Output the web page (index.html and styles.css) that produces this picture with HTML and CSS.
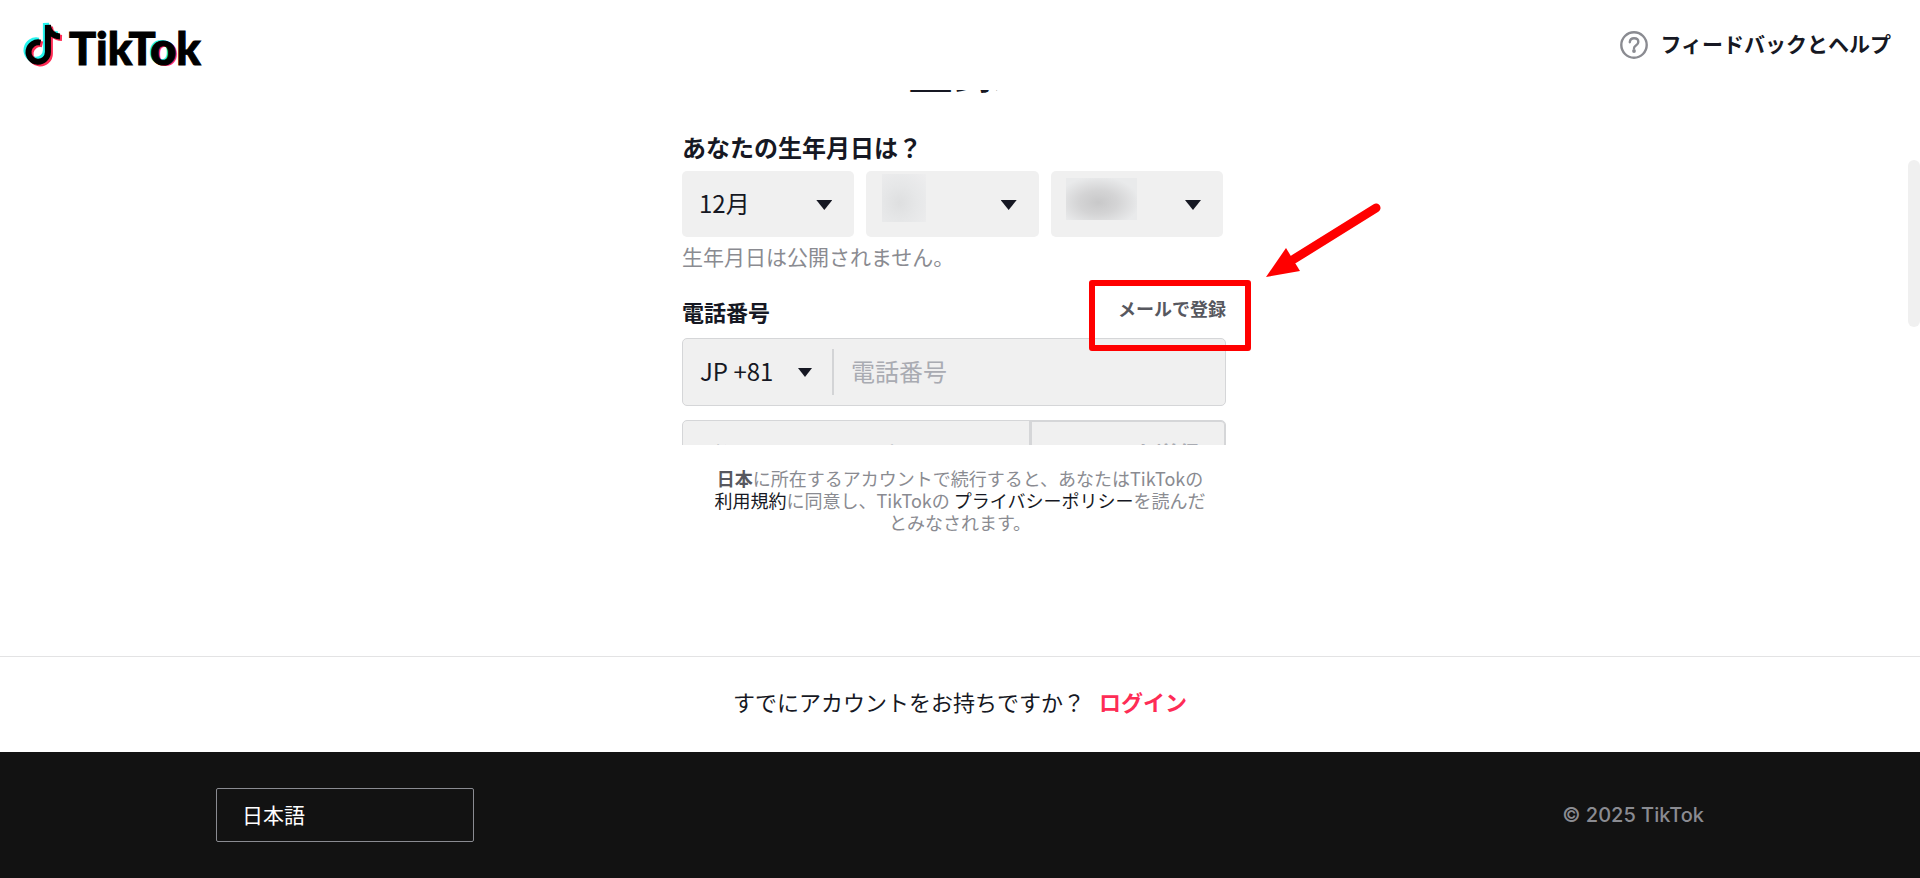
FILE: index.html
```html
<!DOCTYPE html>
<html lang="ja">
<head>
  <meta charset="UTF-8" />
  <meta name="viewport" content="width=device-width, initial-scale=1.0"/>
  <title>登録 | TikTok</title>
  <link rel="stylesheet" href="styles.css">
</head>
<body>

  <!-- Header -->
  <header class="header">
    <a href="#" class="logo" aria-label="TikTok">
      <svg class="logo-note" viewBox="0 0 38 44" fill="none" stroke-width="6" aria-hidden="true">
        <defs>
          <path id="note" d="M16.500 19.600A9.700 9.700 0 1 0 23.900 29V2C24.200 8.500 29 13.200 36 13.400"/>
        </defs>
        <use href="#note" stroke="#25f4ee" transform="translate(-2 -2)"/>
        <use href="#note" stroke="#fe2c55" transform="translate(2 1.700)"/>
        <use href="#note" stroke="#000"/>
      </svg>
      <span class="logo-text">TikT<span class="logo-o">o</span>k</span>
    </a>
    <a href="#" class="help">
      <svg class="help-icon" viewBox="0 0 28 28" fill="none" stroke="#8a8b91" stroke-width="2.4" aria-hidden="true">
        <circle cx="14" cy="14" r="12.7"/>
        <path d="M9.8 11.2c.2-2.4 1.900-3.900 4.300-3.900 2.500 0 4.200 1.500 4.200 3.600 0 1.700-.9 2.500-2.100 3.300-1.500 1-2.200 1.600-2.200 3" stroke-linecap="round"/>
        <circle cx="14" cy="20" r="1.900" fill="#8a8b91" stroke="none"/>
      </svg>
      <span class="help-text">フィードバックとヘルプ</span>
    </a>
  </header>

  <!-- Sign up form -->
  <main class="scroller">
    <form class="form">
      <h1 class="title">登録</h1>

      <h2 class="birth-label">あなたの生年月日は？</h2>
      <div class="birth">
        <div class="select-box">
          <select aria-label="月"><option>12月</option></select>
        </div>
        <div class="select-box">
          <select aria-label="日"><option></option></select>
          <span class="mask mask-day"></span>
        </div>
        <div class="select-box">
          <select aria-label="年"><option></option></select>
          <span class="mask mask-year"></span>
        </div>
      </div>
      <p class="hint">生年月日は公開されません。</p>

      <div class="phone-head">
        <label class="phone-label" for="phone">電話番号</label>
        <a href="#" class="email-link">メールで登録</a>
        <div class="highlight"></div>
        <svg class="arrow" viewBox="0 0 120 80" aria-hidden="true">
          <path d="M30 59 112 8" stroke="#f00" stroke-width="9" stroke-linecap="round"/>
          <path d="M2 77 22 48 36 71z" fill="#f00"/>
        </svg>
      </div>
      <div class="field">
        <div class="country">
          <select aria-label="国番号"><option>JP +81</option></select>
        </div>
        <input type="tel" id="phone" placeholder="電話番号">
      </div>

      <div class="field">
        <input type="text" class="code" aria-label="コード" placeholder="6桁のコードを入力">
        <button type="button" class="send">コードを送信</button>
      </div>
    </form>
    <span class="thumb"></span>
  </main>

  <section class="legal">
    <p><b>日本</b>に所在するアカウントで続行すると、あなたはTikTokの<a href="#">利用規約</a>に同意し、TikTokの <a href="#">プライバシーポリシー</a>を読んだとみなされます。</p>
  </section>

  <section class="login">
    <span>すでにアカウントをお持ちですか？</span>
    <a href="#">ログイン</a>
  </section>

  <!-- Footer -->
  <footer class="footer">
    <select class="language" aria-label="言語"><option>日本語</option></select>
    <span class="copyright">© 2025 TikTok</span>
  </footer>

</body>
</html>
```

FILE: styles.css
```css
* {
  padding: 0;
  margin: 0;
  box-sizing: border-box;
}

body {
  height: 100vh;
  display: flex;
  flex-direction: column;
  background: white;
  color: #161823;
  font-family: "Noto Sans CJK JP", sans-serif;
  overflow: hidden;
}

a {
  color: inherit;
  text-decoration: none;
}

select,
input,
button {
  appearance: none;
  border: none;
  background: none;
  color: inherit;
  font-family: inherit;
  font-size: 24px;
  outline: none;
}

/* Header */
.header {
  display: flex;
  align-items: center;
  justify-content: space-between;
  height: 90px;
  padding: 0 29px 0 24px;
}

.logo {
  display: flex;
  align-items: center;
  gap: 7px;
}

.logo-note {
  width: 38px;
  height: 44px;
  overflow: visible;
}

.logo-text {
  padding-top: 5px;
  color: black;
  font-family: Lato, sans-serif;
  font-size: 45px;
  font-weight: 900;
  line-height: 48px;
  -webkit-text-stroke: 1px black;
}

.logo-o {
  text-shadow: -2px -1px #25f4ee, 2px 1px #fe2c55;
}

.help {
  display: flex;
  align-items: center;
  gap: 12px;
  font-size: 21px;
  font-weight: bold;
}

.help-icon {
  width: 28px;
  height: 28px;
}

.help-text {
  padding-bottom: 4px;
}

/* Form */
.scroller {
  position: relative;
  flex: 1;
  min-height: 0;
  padding-right: 12px;
  overflow: hidden;
}

.form {
  max-width: 544px;
  margin: 0 auto;
}

.title {
  margin-top: -52px;
  font-size: 47px;
  line-height: 60px;
  text-align: center;
}

.birth-label {
  margin-top: 34px;
  font-size: 24px;
  line-height: 30px;
}

.birth {
  display: grid;
  grid-template-columns: repeat(3, 1fr);
  gap: 12px;
  margin-top: 9px;
  padding-right: 3px;
}

.select-box {
  position: relative;
  height: 66px;
  background: #f0f0f0;
  border-radius: 5px;
}

.select-box select {
  width: 100%;
  height: 100%;
  padding: 0 17px 4px;
}

.select-box::after {
  content: "";
  position: absolute;
  top: 29px;
  right: 22px;
  width: 16px;
  height: 10px;
  background: #161823;
  clip-path: polygon(0 0, 100% 0, 50% 100%);
  pointer-events: none;
}

.mask {
  position: absolute;
}

.mask-day {
  top: 3px;
  left: 16px;
  width: 44px;
  height: 48px;
  background: radial-gradient(ellipse at 40% 60%, #dedfe0, #e6e7e8 45%, #eeeeef);
}

.mask-year {
  top: 7px;
  left: 15px;
  width: 71px;
  height: 42px;
  background: radial-gradient(ellipse at 45% 58%, #c8c8c9, #d4d4d5 35%, #e9eaeb 75%);
}

.hint {
  margin-top: 4px;
  color: #8a8b91;
  font-size: 21px;
  line-height: 30px;
}

.phone-head {
  position: relative;
  display: flex;
  justify-content: space-between;
  align-items: flex-start;
  margin-top: 25px;
}

.phone-label {
  font-size: 22px;
  font-weight: bold;
  line-height: 30px;
}

.email-link {
  color: #57585f;
  font-size: 18px;
  font-weight: bold;
  line-height: 24px;
}

.highlight {
  position: absolute;
  z-index: 1;
  top: -16px;
  right: -25px;
  width: 162px;
  height: 71px;
  border: 6px solid #f00;
  border-radius: 3px;
  pointer-events: none;
}

.arrow {
  position: absolute;
  top: -96px;
  right: -158px;
  width: 120px;
  height: 80px;
}

.field {
  display: flex;
  align-items: center;
  height: 68px;
  margin-top: 12px;
  background: #f0f0f0;
  border: 1px solid #d5d6d8;
  border-radius: 5px;
}

.field + .field {
  margin-top: 14px;
}

.field input {
  flex: 1;
  min-width: 0;
  height: 100%;
  padding: 0 17px 3px;
}

.field .code {
  padding-bottom: 0;
}

.field input::placeholder {
  color: #a9abb2;
}

.country {
  position: relative;
  border-right: 2px solid #d3d4d6;
}

.country select {
  width: 149px;
  height: 46px;
  padding: 0 0 4px 17px;
}

.country::after {
  content: "";
  position: absolute;
  top: 19px;
  right: 20px;
  width: 14px;
  height: 9px;
  background: #161823;
  clip-path: polygon(0 0, 100% 0, 50% 100%);
  pointer-events: none;
}

.send {
  width: 196px;
  height: 100%;
  padding: 0 0 4px 12px;
  border: solid #d5d6d8;
  border-width: 1px 1px 1px 3px;
  border-radius: 0 4px 4px 0;
  color: #a9abb2;
  font-size: 22px;
  font-weight: bold;
}

.thumb {
  position: absolute;
  top: 70px;
  right: 0;
  width: 12px;
  height: 167px;
  background: #f0f0f0;
  border-radius: 6px;
}

/* Terms */
.legal {
  padding: 22px 0 123px;
  color: #8a8b91;
  font-size: 18px;
  line-height: 22px;
  text-align: center;
}

.legal p {
  max-width: 494px;
  margin: 0 auto;
}

.legal b {
  color: #57585f;
}

.legal a {
  color: #161823;
}

.login {
  display: flex;
  align-items: center;
  justify-content: center;
  gap: 14px;
  height: 96px;
  padding-bottom: 8px;
  border-top: 1px solid #e3e3e4;
  font-size: 22px;
}

.login a {
  color: #fe2c55;
  font-weight: bold;
}

/* Footer */
.footer {
  display: flex;
  align-items: center;
  justify-content: space-between;
  height: 126px;
  padding: 0 216px;
  background: #121212;
}

.language {
  width: 258px;
  height: 54px;
  padding: 0 25px 2px;
  border: 1px solid #8a8b91;
  border-radius: 2px;
  color: white;
  font-size: 21px;
}

.copyright {
  color: #8a8b91;
  font-family: Inter, sans-serif;
  font-size: 20px;
  font-weight: 500;
}
```
